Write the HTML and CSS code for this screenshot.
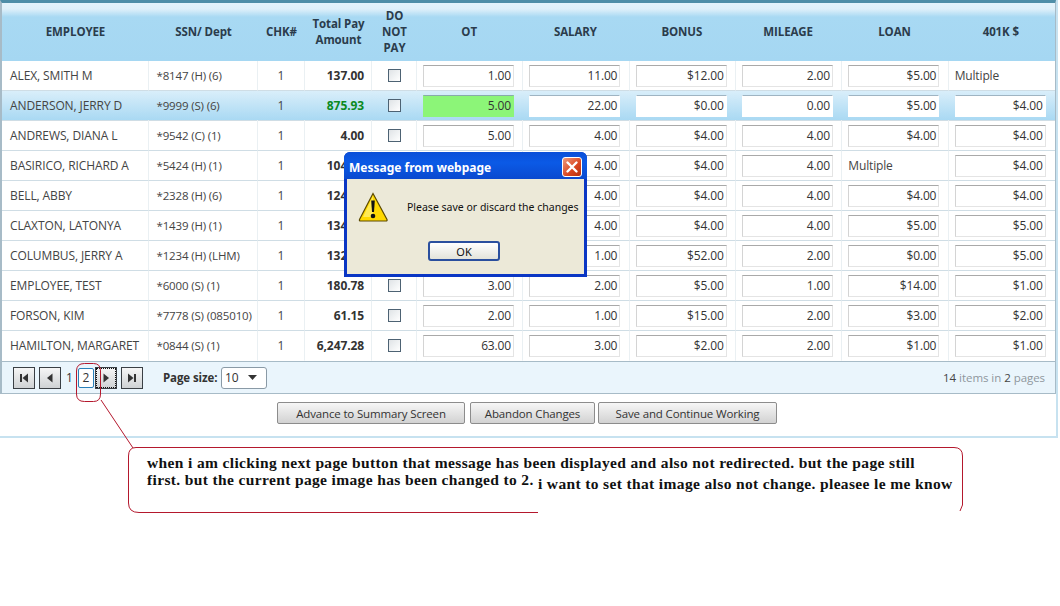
FILE: index.html
```html
<!DOCTYPE html>
<html lang="en">
<head>
<meta charset="utf-8">
<title>Payroll grid</title>
<link rel="stylesheet" href="styles.css">
</head>
<body>
<div class="page">
  <div class="panel">
    <div class="grid">
      <table class="table">
        <colgroup>
          <col class="c-emp"><col class="c-ssn"><col class="c-chk"><col class="c-tot"><col class="c-dnp">
          <col><col><col><col><col><col>
        </colgroup>
        <thead>
          <tr>
            <th>EMPLOYEE</th><th>SSN/ Dept</th><th>CHK#</th><th>Total Pay Amount</th><th>DO NOT PAY</th>
            <th>OT</th><th>SALARY</th><th>BONUS</th><th>MILEAGE</th><th>LOAN</th><th>401K $</th>
          </tr>
        </thead>
        <tbody>
          <tr>
            <td>ALEX, SMITH M</td><td>*8147 (H) (6)</td><td class="ctr">1</td><td class="tot">137.00</td><td class="ctr"><span class="check"></span></td>
            <td><div class="box">1.00</div></td><td><div class="box">11.00</div></td><td><div class="box">$12.00</div></td><td><div class="box">2.00</div></td><td><div class="box">$5.00</div></td><td>Multiple</td>
          </tr>
          <tr class="selected">
            <td>ANDERSON, JERRY D</td><td>*9999 (S) (6)</td><td class="ctr">1</td><td class="tot green">875.93</td><td class="ctr"><span class="check"></span></td>
            <td><div class="box hl">5.00</div></td><td><div class="box">22.00</div></td><td><div class="box">$0.00</div></td><td><div class="box">0.00</div></td><td><div class="box">$5.00</div></td><td><div class="box">$4.00</div></td>
          </tr>
          <tr>
            <td>ANDREWS, DIANA L</td><td>*9542 (C) (1)</td><td class="ctr">1</td><td class="tot">4.00</td><td class="ctr"><span class="check"></span></td>
            <td><div class="box">5.00</div></td><td><div class="box">4.00</div></td><td><div class="box">$4.00</div></td><td><div class="box">4.00</div></td><td><div class="box">$4.00</div></td><td><div class="box">$4.00</div></td>
          </tr>
          <tr>
            <td>BASIRICO, RICHARD A</td><td>*5424 (H) (1)</td><td class="ctr">1</td><td class="tot">104.00</td><td class="ctr"><span class="check"></span></td>
            <td><div class="box">5.00</div></td><td><div class="box">4.00</div></td><td><div class="box">$4.00</div></td><td><div class="box">4.00</div></td><td>Multiple</td><td><div class="box">$4.00</div></td>
          </tr>
          <tr>
            <td>BELL, ABBY</td><td>*2328 (H) (6)</td><td class="ctr">1</td><td class="tot">124.00</td><td class="ctr"><span class="check"></span></td>
            <td><div class="box">5.00</div></td><td><div class="box">4.00</div></td><td><div class="box">$4.00</div></td><td><div class="box">4.00</div></td><td><div class="box">$4.00</div></td><td><div class="box">$4.00</div></td>
          </tr>
          <tr>
            <td>CLAXTON, LATONYA</td><td>*1439 (H) (1)</td><td class="ctr">1</td><td class="tot">134.00</td><td class="ctr"><span class="check"></span></td>
            <td><div class="box">5.00</div></td><td><div class="box">4.00</div></td><td><div class="box">$4.00</div></td><td><div class="box">4.00</div></td><td><div class="box">$5.00</div></td><td><div class="box">$5.00</div></td>
          </tr>
          <tr>
            <td>COLUMBUS, JERRY A</td><td>*1234 (H) (LHM)</td><td class="ctr">1</td><td class="tot">132.00</td><td class="ctr"><span class="check"></span></td>
            <td><div class="box">2.00</div></td><td><div class="box">1.00</div></td><td><div class="box">$52.00</div></td><td><div class="box">2.00</div></td><td><div class="box">$0.00</div></td><td><div class="box">$5.00</div></td>
          </tr>
          <tr>
            <td>EMPLOYEE, TEST</td><td>*6000 (S) (1)</td><td class="ctr">1</td><td class="tot">180.78</td><td class="ctr"><span class="check"></span></td>
            <td><div class="box">3.00</div></td><td><div class="box">2.00</div></td><td><div class="box">$5.00</div></td><td><div class="box">1.00</div></td><td><div class="box">$14.00</div></td><td><div class="box">$1.00</div></td>
          </tr>
          <tr>
            <td>FORSON, KIM</td><td>*7778 (S) (085010)</td><td class="ctr">1</td><td class="tot">61.15</td><td class="ctr"><span class="check"></span></td>
            <td><div class="box">2.00</div></td><td><div class="box">1.00</div></td><td><div class="box">$15.00</div></td><td><div class="box">2.00</div></td><td><div class="box">$3.00</div></td><td><div class="box">$2.00</div></td>
          </tr>
          <tr>
            <td>HAMILTON, MARGARET</td><td>*0844 (S) (1)</td><td class="ctr">1</td><td class="tot">6,247.28</td><td class="ctr"><span class="check"></span></td>
            <td><div class="box">63.00</div></td><td><div class="box">3.00</div></td><td><div class="box">$2.00</div></td><td><div class="box">2.00</div></td><td><div class="box">$1.00</div></td><td><div class="box">$1.00</div></td>
          </tr>
        </tbody>
      </table>
      <div class="pager">
        <div class="nav">
          <span class="navbtn"><svg width="12" height="12" viewBox="0 0 12 12"><rect x="2" y="2" width="2" height="8" fill="#333"/><path d="M10 1.500V10.500L4.500 6Z" fill="#333"/></svg></span>
          <span class="navbtn"><svg width="12" height="12" viewBox="0 0 12 12"><path d="M8.500 1.500V10.500L3 6Z" fill="#333"/></svg></span>
          <span class="num">1</span>
          <span class="num current">2</span>
          <span class="navbtn focus"><svg width="12" height="12" viewBox="0 0 12 12"><path d="M3.500 1.500V10.500L9 6Z" fill="#333"/></svg></span>
          <span class="navbtn"><svg width="12" height="12" viewBox="0 0 12 12"><path d="M2 1.500V10.500L7.500 6Z" fill="#333"/><rect x="8" y="2" width="2" height="8" fill="#333"/></svg></span>
        </div>
        <span class="size-label">Page size:</span>
        <span class="select">10<svg width="9" height="5" viewBox="0 0 9 5"><path d="M0 0H9L4.500 5Z" fill="#333"/></svg></span>
        <span class="info"><b>14</b> items in <b>2</b> pages</span>
      </div>
    </div>
    <div class="actions">
      <span class="btn b1">Advance to Summary Screen</span>
      <span class="btn b2">Abandon Changes</span>
      <span class="btn b3">Save and Continue Working</span>
    </div>
  </div>

  <div class="dialog">
    <div class="dlg-title">
      <span>Message from webpage</span>
      <span class="dlg-close"><svg width="14" height="14" viewBox="0 0 14 14"><path d="M2.500 2.500L11.500 11.500M11.500 2.500L2.500 11.500" stroke="#fff" stroke-width="2.400" stroke-linecap="round"/></svg></span>
    </div>
    <div class="dlg-body">
      <div class="dlg-msg">
        <svg class="warn" width="32" height="32" viewBox="0 0 32 32">
          <path d="M16 2.500L30 28.500Q30.500 30 29 30H3.500Q2 30 2.500 28.500Z" fill="#ffd800" stroke="#5c4a00" stroke-width="1.200"/>
          <path d="M16 5L6 26H16Z" fill="#fff27a" opacity=".7"/>
          <path d="M14.200 9.500H17.800L17 21H15Z" fill="#111"/>
          <circle cx="16" cy="25" r="2.300" fill="#111"/>
        </svg>
        <span>Please save or discard the changes</span>
      </div>
      <span class="dlg-ok">OK</span>
    </div>
  </div>

  <svg class="marks" width="1060" height="606" viewBox="0 0 1060 606">
    <g fill="none" stroke="#b4182d" stroke-width="1">
      <path d="M84.500 363.500H93.500Q100.500 363.500 100.500 371V394Q100.500 401.500 93.500 401.500H84.500Q76.500 401.500 76.500 394V371Q76.500 363.500 84.500 363.500Z"/>
      <path d="M101 400L133 448"/>
      <path d="M538 512.500H139Q128.500 512.500 128.500 503V456Q128.500 447.500 136 447.500H954Q962.500 447.500 962.500 456V505L960 511"/>
    </g>
  </svg>
  <div class="note">
    <div>when i am clicking next page button that message has been displayed and also not redirected. but the page still</div>
    <div>first. but the current page image has been changed to 2. <span class="note-sm">i want to set that image also not change. pleasee le me know</span></div>
  </div>
</div>
</body>
</html>
```
FILE: styles.css
```css
* { box-sizing: border-box; }
html, body { margin: 0; padding: 0; background: #fff; }
body { font-family: "Open Sans", "Noto Sans", sans-serif; font-size: 12px; color: #444; overflow: hidden; }
.page { position: relative; width: 1060px; height: 606px; overflow: hidden; }

.panel { width: 1058px; height: 438px; border-right: 2px solid #c7e2f0; border-bottom: 2px solid #c7e2f0; }
.grid { width: 1056px; margin-left: 0; border-left: 2px solid #a7bbc7; border-right: 1px solid #a7bbc7; border-bottom: 1px solid #a7bbc7; border-top: 3px solid #4f8ea8; }

.table { width: 100%; border-collapse: separate; border-spacing: 0; table-layout: fixed; }
.c-emp { width: 147px; }
.c-ssn { width: 109px; }
.c-chk { width: 47px; }
.c-tot { width: 67px; }
.c-dnp { width: 45px; }

th { height: 58px; padding: 0 4px; font-size: 11.500px; letter-spacing: -.1px; line-height: 16px; font-weight: 700; color: #2b3c4c; text-align: center; background: linear-gradient(#e4f3fc 0, #dff0fa 6px, #a8d9f3 14px, #a5d7f2 100%); }
th:nth-child(n+6) { padding: 0 6px 0 4px; }
td { height: 30px; padding: 0 0 0 8px; white-space: nowrap; border-right: 1px solid #eaf0f3; border-bottom: 1px solid #cfdde5; background: #fff; font-size: 12px; letter-spacing: -.1px; }
td:nth-child(2) { padding-left: 7.500px; font-size: 11.500px; letter-spacing: -.15px; }
td:nth-child(n+6) { padding-left: 6px; letter-spacing: -.15px; }
td:last-child { border-right: 0; }
tbody tr:last-child td { border-bottom-color: transparent; }
td.ctr { text-align: center; padding: 0; }
td.tot { text-align: right; padding: 0 7px 0 0; font-weight: 700; color: #333; }
td.green { color: #0b8a1f; }
.selected td { background: linear-gradient(#d9eefa, #a9d9f3); border-right-color: transparent; }

.box { width: 91px; height: 22px; padding: 0 2px; line-height: 19px; text-align: right; background: #fff; border: 1px solid #e4e4e4; border-top-color: #a9a9a9; border-left-color: #d4d4d4; color: #333; }
.box.hl { background: #8cf578; }
.selected .box { border-color: #fff; border-top-color: #9fb4c2; }
.selected .box.hl { border-color: #8cf578; border-top-color: #8aa; }
.check { display: block; margin: 0 auto; width: 13px; height: 13px; border: 1px solid #4d6273; background: linear-gradient(135deg, #dfe3e6, #fff); }

.pager { height: 32px; display: flex; align-items: center; padding-left: 11px; background: #eaf5fc; border-top: 1px solid #a7bbc7; }
.nav { display: flex; align-items: center; }
.navbtn { width: 22px; height: 22px; margin-right: 4px; display: flex; align-items: center; justify-content: center; border: 1px solid #3a3f44; background: linear-gradient(#f6f6f6, #cfd2d4); }
.navbtn.focus { outline: 1px dotted #111; outline-offset: -2px; margin-left: 1px; }
.num { text-align: center; color: #333; font-size: 12px; }
.num:not(.current) { width: 9px; margin-right: 4px; }
.num.current { width: 16px; height: 20px; line-height: 18px; border: 1px solid #2a80b9; border-radius: 2px; background: #fff; }
.size-label { margin-left: 16px; width: 58px; font-size: 11.500px; letter-spacing: -.1px; font-weight: 700; color: #333; }
.select { width: 46px; height: 22px; padding: 0 9px 0 3px; display: flex; align-items: center; justify-content: space-between; background: #fff; border: 1px solid #8a9aa6; border-radius: 3px; color: #333; }
.info { margin-left: auto; margin-right: 10px; font-size: 11.500px; letter-spacing: -.05px; color: #8f979d; }
.info b { font-weight: 400; color: #444; }

.actions { display: flex; justify-content: flex-start; padding: 8px 0 0 277px; }
.btn { height: 22px; line-height: 21px; text-align: center; background: linear-gradient(#f6f6f6, #d2d2d2); border: 1px solid #8c8c8c; border-radius: 2px; color: #333; font-size: 11.500px; letter-spacing: -.15px; }
.b1 { width: 188px; margin-right: 5px; }
.b2 { width: 125px; margin-right: 3px; }
.b3 { width: 179px; }

.dialog { position: absolute; left: 344px; top: 152px; width: 243px; height: 125px; background: #0a36c4; border-radius: 6px 6px 0 0; padding: 0 3px 3px; display: flex; flex-direction: column; }
.dlg-title { height: 27px; margin: 0 -3px; padding: 3px 5px 0 5px; display: flex; align-items: center; justify-content: space-between; color: #fff; font-family: "Noto Sans", sans-serif; font-weight: 700; font-size: 12px; background: linear-gradient(#0a4fd8, #0b5ae6 40%, #0a49cf); border-radius: 6px 6px 0 0; }
.dlg-close { width: 20px; height: 20px; display: flex; align-items: center; justify-content: center; background: linear-gradient(135deg, #f09a7c, #d8451f 60%, #b5300f); border: 1px solid #fff; border-radius: 3px; }
.dlg-body { flex: 1; position: relative; background: #ece9d8; color: #111; font-family: "Noto Sans", sans-serif; font-size: 10.500px; display: flex; flex-direction: column; align-items: center; }
.dlg-msg { width: 100%; display: flex; align-items: center; padding: 12px 0 0 10px; }
.warn { flex: none; margin-right: 18px; }
.dlg-ok { margin-top: 18px; margin-left: -3px; width: 72px; height: 20px; line-height: 17px; text-align: center; color: #111; font-size: 11px; background: linear-gradient(#fff, #e3e3da); border: 2px solid #2a4f9e; border-radius: 3px; }

.marks { position: absolute; left: 0; top: 0; pointer-events: none; }
.note { position: absolute; left: 147px; top: 454px; width: 815px; font-family: "Liberation Serif", serif; font-weight: 700; font-size: 15.500px; line-height: 17px; letter-spacing: .36px; color: #111; white-space: nowrap; }
.note-sm { position: relative; top: 4px; }
```
